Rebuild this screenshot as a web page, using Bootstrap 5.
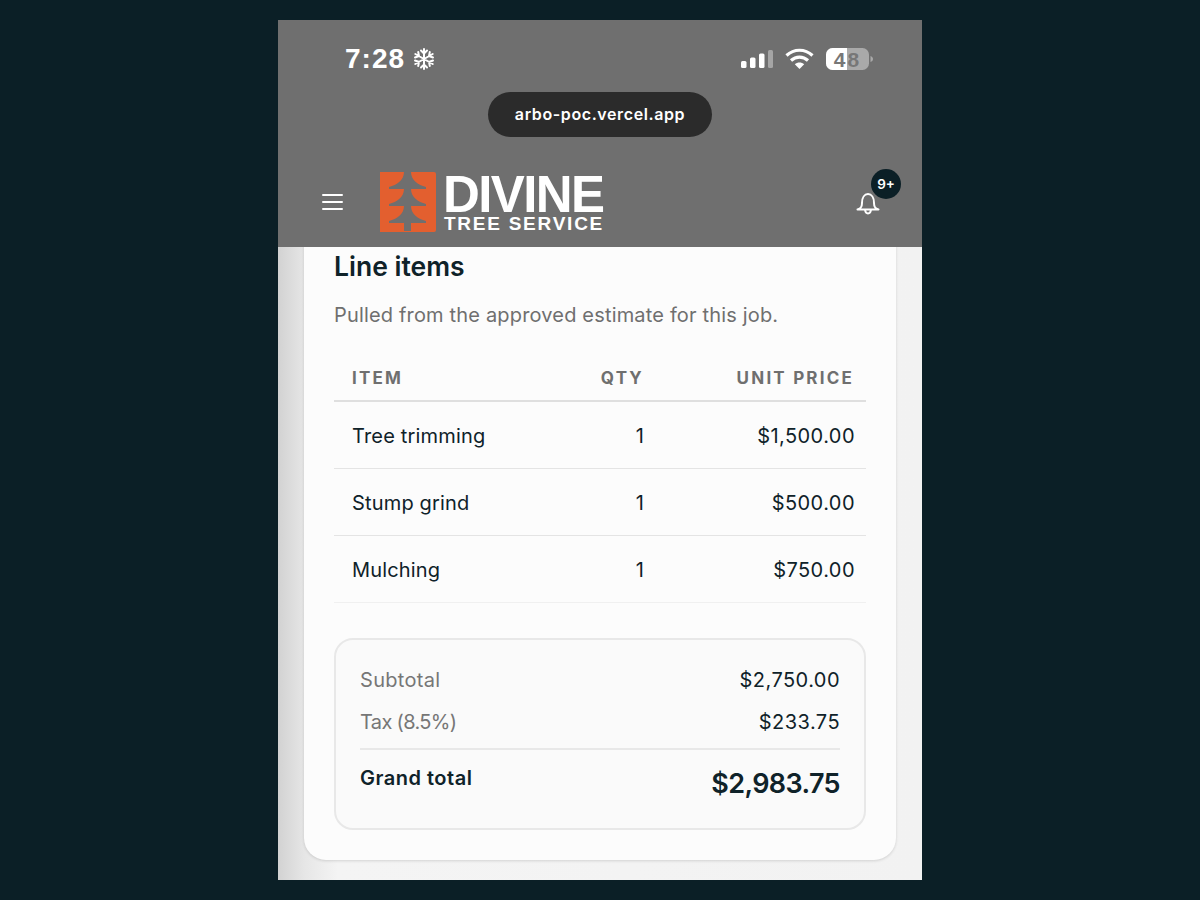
<!DOCTYPE html>
<html lang="en">
<head>
<meta charset="utf-8">
<title>Line items</title>
<link href="https://cdn.jsdelivr.net/npm/bootstrap@5.3.0/dist/css/bootstrap.min.css" rel="stylesheet">
<style>
html,body{height:100%}
body{background:#0b1f26;font-family:Inter,"Liberation Sans",sans-serif;color:#0f2229}
.stage{height:900px;padding-top:20px}
.phone{width:644px;height:860px;background:linear-gradient(90deg,#d2d2d2 0,#e6e6e6 26px,#f4f4f4 60px,#f2f2f2 100%);overflow:hidden}
.topbar{height:227px;background:#6f6f6f;color:#fff;position:relative;z-index:2}
.statusline{height:72px;padding:6px 49px 0 67px}
.clock{font-family:"Liberation Sans",sans-serif;font-weight:700;font-size:28px;letter-spacing:1px;line-height:1}
.status-icons{gap:12px}
.urlwrap{height:45px}
.urlpill{width:224px;height:45px;background:#2b2b2b;border-radius:23px;font-size:16px;font-weight:600;letter-spacing:.6px;padding-bottom:2px}
.brandrow{height:110px;padding:20px 42px 0 44px}
.logo-mark{width:56px;height:60px;margin-left:37px;flex:none}
.wordmark{margin-left:7px;font-family:"Liberation Sans",sans-serif;font-weight:700;line-height:1}
.word-top{font-size:51px;height:44px;line-height:47px;letter-spacing:-1.600px}
.word-sub{font-size:19px;letter-spacing:1.750px;height:18px;line-height:18px;margin-left:1px}
.bellwrap{position:relative;width:24px;height:26px;margin-top:2px}
.countbadge{position:absolute;top:-21px;left:15px;width:30px;height:30px;border-radius:50%;background:#0b1f26;color:#fff;font-size:13.500px;font-weight:600}
.sheet{width:592px;height:632px;margin:-19px 0 0 26px;background:#fcfcfc;border-radius:0 0 22px 22px;box-shadow:0 1px 3px rgba(0,0,0,.14);padding:18px 30px 0}
.sheet-title{font-size:26.500px;font-weight:600;line-height:40px;margin:0}
.sheet-sub{font-size:20px;letter-spacing:.17px;color:#6f6f6f;line-height:28px;margin:15px 0 22px}
.items{width:100%;margin:0}
.items th{height:50px;font-size:17px;font-weight:700;color:#6f6f6f;letter-spacing:2.200px;padding:6px 12px 0 18px;border-bottom:2px solid #dfdfdf;background:transparent;vertical-align:middle}
.items td{height:67px;font-size:20px;letter-spacing:.17px;padding:2px 11px 0 18px;border-bottom:1px solid #e4e4e4;background:transparent;color:#0f2229;vertical-align:middle}
.items tr:last-child td{border-bottom-color:#f0f0f0}
.items .qtycol{width:104px;padding-right:0;padding-left:0;text-align:right}
.items .pricecol{width:222px;text-align:right}
.items td.pricecol{letter-spacing:.45px}
.totals{margin-top:35px;height:192px;border:2px solid #e8e8e8;border-radius:19px;background:#fafafa;padding:19px 24px 0}
.trow{height:42px;font-size:20px;letter-spacing:.45px}
.tname{color:#767676;letter-spacing:.3px}
.tname-tight{letter-spacing:-.65px}
.grand{border-top:2px solid #e8e8e8;margin-top:5px;padding-top:12px;align-items:flex-start}
.grand-l{font-size:20px;font-weight:600;line-height:32px;letter-spacing:.5px}
.grand-r{font-size:27px;font-weight:600;line-height:44px;letter-spacing:-.6px}
</style>
</head>
<body>
<div class="stage d-flex justify-content-center">
<div class="phone">
  <div class="topbar">
    <div class="statusline d-flex justify-content-between align-items-center">
      <div class="d-flex align-items-center gap-2">
        <span class="clock">7:28</span>
        <svg width="22" height="22" viewBox="0 0 22 22" stroke="#fff" stroke-width="2" fill="none" stroke-linecap="round"><path d="M11 1v20M2.300 6l17.400 10M19.700 6 2.300 16M8 2.500l3 3 3-3M8 19.500l3-3 3 3M2 9.500l4-1.500-.8-4M20 9.500 16 8l.8-4M2 12.500 6 14l-.8 4M20 12.500 16 14l.8 4"/></svg>
      </div>
      <div class="status-icons d-flex align-items-center">
        <svg width="32" height="20" viewBox="0 0 32 20" fill="#fff"><rect x="0" y="12" width="5.500" height="7" rx="1.500"/><rect x="9" y="8.500" width="5.500" height="10.500" rx="1.500"/><rect x="18" y="4.500" width="5.500" height="14.500" rx="1.500"/><rect x="27" y="1" width="5" height="18" rx="1.500" fill="#a5a5a5"/></svg>
        <svg width="29" height="22" viewBox="0 0 29 22" fill="none" stroke="#fff" stroke-width="3.200"><path d="M1.500 7.500C9 .5 20 .5 27.500 7.500M6 12.500c5-4.500 12-4.500 17 0"/><path d="M14.500 21 9.800 16.200c2.700-2.300 6.700-2.300 9.400 0z" fill="#fff" stroke="none"/></svg>
        <svg width="47" height="28" viewBox="0 -3 47 28"><rect x="0" y="0" width="43" height="22" rx="6.500" fill="#a9a9a9"/><path d="M6.500 0H21v22H6.500A6.500 6.500 0 0 1 0 15.500v-9A6.500 6.500 0 0 1 6.500 0z" fill="#fff"/><path d="M44.500 8c1.500.5 2.500 1.500 2.500 3s-1 2.500-2.500 3z" fill="#a9a9a9"/><text x="21.500" y="18.500" text-anchor="middle" font-family="Liberation Sans" font-weight="700" font-size="21" fill="#777" letter-spacing="2">48</text></svg>
      </div>
    </div>
    <div class="urlwrap d-flex justify-content-center">
      <div class="urlpill d-flex align-items-center justify-content-center">arbo-poc.vercel.app</div>
    </div>
    <div class="brandrow d-flex align-items-center">
      <svg width="21" height="16" viewBox="0 0 21 16" stroke="#fff" stroke-width="2" stroke-linecap="round"><path d="M1 1h19M1 8h19M1 15h19"/></svg>
      <svg class="logo-mark" viewBox="0 0 56 60"><path d="M0 0h54a2 2 0 0 1 2 2v56a2 2 0 0 1-2 2H0z" fill="#e35f2f"/><path d="M24 0C24 8 17 13 9 15v2h15c0 8-7 13-15 15v2h15c0 8-7 13-15 15v2h15v8h7v-8h15v-2c-8-2-15-7-15-15h15v-2c-8-2-15-7-15-15h15v-2C38 13 31 8 31 0z" fill="#6f6f6f"/></svg>
      <div class="wordmark">
        <div class="word-top">DIVINE</div>
        <div class="word-sub">TREE SERVICE</div>
      </div>
      <div class="ms-auto bellwrap">
        <svg width="24" height="26" viewBox="0 0 24 26" fill="none" stroke="#fff" stroke-width="2" stroke-linejoin="round"><path d="M1.500 18.500c3.500-1 4.500-2.500 4.500-6.500 0-5.500 2.500-9 6-9s6 3.500 6 9c0 4 1 5.500 4.500 6.500z"/><path d="M9 18.500c.3 2.500 1.500 4 3 4s2.700-1.500 3-4"/></svg>
        <span class="countbadge d-flex align-items-center justify-content-center">9+</span>
      </div>
    </div>
  </div>
  <div class="sheet">
    <h2 class="sheet-title">Line items</h2>
    <p class="sheet-sub">Pulled from the approved estimate for this job.</p>
    <table class="table items">
      <thead><tr><th>ITEM</th><th class="qtycol">QTY</th><th class="pricecol">UNIT PRICE</th></tr></thead>
      <tbody>
        <tr><td>Tree trimming</td><td class="qtycol">1</td><td class="pricecol">$1,500.00</td></tr>
        <tr><td>Stump grind</td><td class="qtycol">1</td><td class="pricecol">$500.00</td></tr>
        <tr><td>Mulching</td><td class="qtycol">1</td><td class="pricecol">$750.00</td></tr>
      </tbody>
    </table>
    <div class="totals">
      <div class="trow d-flex justify-content-between align-items-center"><span class="tname">Subtotal</span><span>$2,750.00</span></div>
      <div class="trow d-flex justify-content-between align-items-center"><span class="tname tname-tight">Tax (8.5%)</span><span>$233.75</span></div>
      <div class="grand d-flex justify-content-between"><span class="grand-l">Grand total</span><span class="grand-r">$2,983.75</span></div>
    </div>
  </div>
</div>
</div>
<script src="https://cdn.jsdelivr.net/npm/bootstrap@5.3.0/dist/js/bootstrap.bundle.min.js"></script>
</body>
</html>
